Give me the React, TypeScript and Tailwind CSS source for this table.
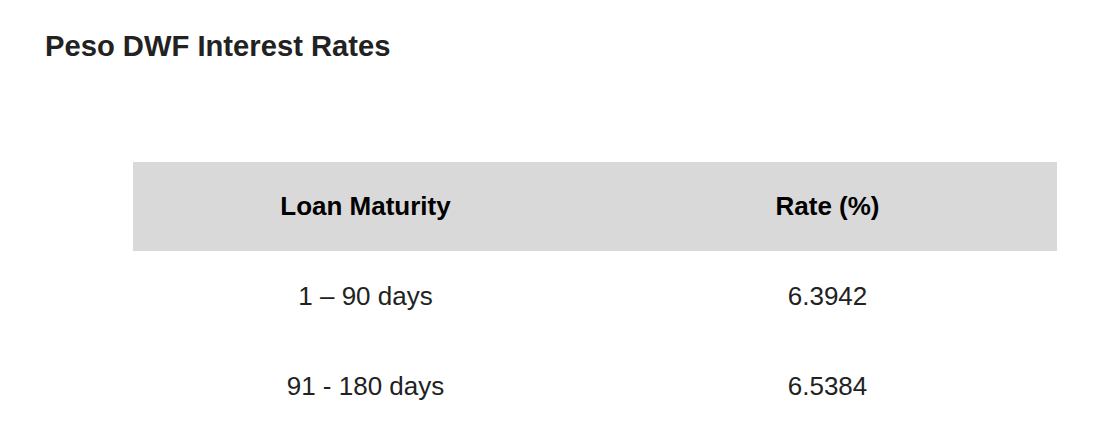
const rows = [
  { maturity: '1 – 90 days', rate: '6.3942' },
  { maturity: '91 - 180 days', rate: '6.5384' },
]

export default function App() {
  return (
    <div className="min-h-[436px] bg-white pt-[29px] pl-[45px] font-['Liberation_Sans',Arial,sans-serif]">
      <h2 className="text-[29.2px] leading-[34px] font-bold text-[#222222]">Peso DWF Interest Rates</h2>

      <table className="mt-[99px] ml-[88px] w-[924px] table-fixed border-collapse text-[26px]">
        <thead>
          <tr className="h-[89px] bg-[#d9d9d9]">
            <th className="pl-[3px] text-center font-bold text-black">Loan Maturity</th>
            <th className="pl-[3px] text-center font-bold text-black">Rate (%)</th>
          </tr>
        </thead>
        <tbody>
          {rows.map((row) => (
            <tr key={row.rate} className="h-[90px]">
              <td className="pl-[3px] text-center text-[#222222]">{row.maturity}</td>
              <td className="pl-[3px] text-center text-[#222222]">{row.rate}</td>
            </tr>
          ))}
        </tbody>
      </table>
    </div>
  )
}
